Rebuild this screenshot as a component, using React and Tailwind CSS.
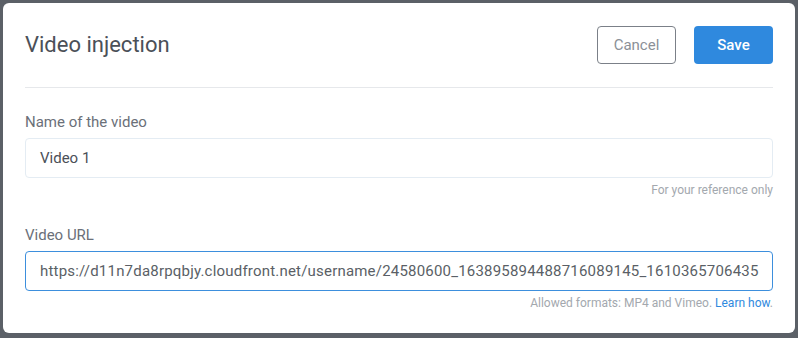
export default function App() {
  return (
    <div className="w-[798px] h-[338px] bg-[#5b6067] p-[3px]" style={{ fontFamily: "Roboto, 'Liberation Sans', sans-serif" }}>
      <div className="w-[792px] h-[330px] bg-white rounded-[6px] px-[22px] pt-[23px] flex flex-col">
        <div className="flex items-center justify-between pb-[23px] border-b border-[#e6e8eb]">
          <h1 className="text-[22px] leading-[28px] text-[#4b5058] font-normal">Video injection</h1>
          <div className="flex gap-[18px]">
            <button className="w-[79px] h-[38px] rounded-[4px] border border-[#7b8088] text-[15px] text-[#8b9097] bg-white">Cancel</button>
            <button className="w-[79px] h-[38px] rounded-[4px] bg-[#2f89de] text-[15px] font-medium text-white">Save</button>
          </div>
        </div>
        <div className="pt-[24px] flex flex-col">
          <label className="text-[15px] leading-[20px] text-[#6b7079] mb-[6px]">Name of the video</label>
          <div className="h-[40px] rounded-[4px] border border-[#e4ecf3] flex items-center px-[14px] text-[15px] text-[#4b5058]">Video 1</div>
          <div className="text-right text-[12px] leading-[16px] text-[#a3a8ae] mt-[4px]">For your reference only</div>
          <label className="text-[15px] leading-[20px] text-[#6b7079] mt-[27px] mb-[6px]">Video URL</label>
          <div className="h-[40px] rounded-[4px] border border-[#3d8fdd] flex items-center px-[14px] text-[15px] tracking-[0.2px] text-[#5a5f66] overflow-hidden whitespace-nowrap">https://d11n7da8rpqbjy.cloudfront.net/username/24580600_163895894488716089145_1610365706435</div>
          <div className="text-right text-[12px] leading-[16px] text-[#a3a8ae] mt-[4px]">Allowed formats: MP4 and Vimeo. <span className="text-[#2f89de]">Learn how</span>.</div>
        </div>
      </div>
    </div>
  );
}
